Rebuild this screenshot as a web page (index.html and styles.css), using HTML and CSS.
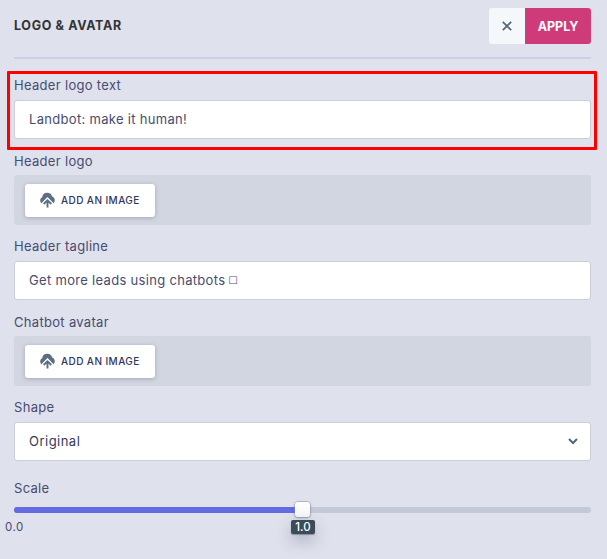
FILE: index.html
```html
<!DOCTYPE html>
<html lang="en">
<head>
<meta charset="utf-8">
<title>Logo &amp; Avatar</title>
<link rel="stylesheet" href="styles.css">
</head>
<body>
<svg class="symbols" aria-hidden="true">
  <symbol id="upload" viewBox="0 0 15 16">
    <path fill="#5c6f82" d="M2 11.500C.8 10.800.2 9.800.2 8.500c0-1.600.8-2.800 2-3.300C2.600 2.300 4.500.8 7.200.8c2.700 0 4.300 1.400 4.900 3.600 1.700.5 2.700 2 2.700 3.900 0 1.400-.6 2.500-1.800 3.200L7.500 5.800z"/>
    <path fill="none" stroke="#fff" stroke-width="1.300" d="M1.900 11.600 7.500 6l5.600 5.600"/>
    <path fill="none" stroke="#5c6f82" stroke-width="1.900" d="M7.500 15.600V8.700M3.700 12 7.500 8.300l3.800 3.700"/>
  </symbol>
</svg>
<main class="panel">
  <header class="header">
    <h1 class="title">LOGO &amp; AVATAR</h1>
    <div class="actions">
      <button class="close" aria-label="Close"><svg width="10" height="10" viewBox="0 0 10 10"><path d="M.8.8l8.400 8.400M9.200.8L.8 9.200"/></svg></button>
      <button class="apply">APPLY</button>
    </div>
  </header>
  <section class="field highlighted">
    <div class="label">Header logo text</div>
    <div class="input"><span>Landbot: make it human!</span></div>
  </section>
  <section class="field">
    <div class="label">Header logo</div>
    <div class="upload"><button class="add"><svg width="15" height="16"><use href="#upload"/></svg><span>ADD AN IMAGE</span></button></div>
  </section>
  <section class="field">
    <div class="label">Header tagline</div>
    <div class="input"><span>Get more leads using chatbots</span><span class="glyph">□</span></div>
  </section>
  <section class="field">
    <div class="label">Chatbot avatar</div>
    <div class="upload"><button class="add"><svg width="15" height="16"><use href="#upload"/></svg><span>ADD AN IMAGE</span></button></div>
  </section>
  <section class="field">
    <div class="label">Shape</div>
    <div class="input select"><span>Original</span><svg width="10" height="7" viewBox="0 0 10 7"><path d="M1 1l4 4 4-4"/></svg></div>
  </section>
  <section class="field scale">
    <div class="label">Scale</div>
    <div class="track">
      <div class="fill"></div>
      <div class="thumb"></div>
      <span class="min">0.0</span>
      <span class="value">1.0</span>
    </div>
  </section>
</main>
</body>
</html>
```
FILE: styles.css
```css
* { box-sizing: border-box; }
body {
  margin: 0;
  height: 559px;
  overflow: hidden;
  background: #dfe1ec;
  color: #484c70;
  font: 13px/20px Inter, "Liberation Sans", sans-serif;
  letter-spacing: .31px;
}
button { border: 0; margin: 0; padding: 0; font: inherit; letter-spacing: inherit; }
.symbols { position: absolute; width: 0; height: 0; }
.panel { padding: 0 16px 0 14px; }
.header {
  display: flex;
  justify-content: space-between;
  height: 59px;
  padding-top: 8px;
  border-bottom: 2px solid #cdd0e4;
}
.title { margin: 0; font-size: 12.5px; line-height: 35px; font-weight: 700; letter-spacing: .65px; color: #333; }
.actions { display: flex; height: 36px; border-radius: 3px; overflow: hidden; }
.close { width: 36px; display: grid; place-items: center; background: #f4f8fb; }
.close svg { fill: none; stroke: #52677a; stroke-width: 1.7; }
.apply { width: 66px; background: #cf3b79; color: #fff; font-size: 12.5px; font-weight: 700; line-height: 35px; letter-spacing: 0; }
.field { margin-top: 11px; }
.label { height: 20px; margin-bottom: 4px; white-space: nowrap; }
.input {
  display: flex;
  align-items: center;
  height: 39px;
  margin-top: 5px;
  padding: 0 12px 1px 14px;
  background: #fff;
  border: 1px solid #cdced5;
  border-radius: 3px;
  white-space: nowrap;
}
.field:has(.input) .label { margin-bottom: 0; }
.field:has(.input) + .field:has(.upload) { margin-top: 12px; }
.field.highlighted { position: relative; margin-top: 16px; }
.highlighted::after {
  content: "";
  position: absolute;
  inset: -4px -6px -11px -7px;
  border: 3px solid #fe0000;
  border-radius: 1px;
}
.field.scale { margin-top: 17px; }
.upload {
  height: 50px;
  padding: 9px 11px;
  background: #d2d6e1;
  border-radius: 3px;
}
.add {
  display: flex;
  align-items: center;
  gap: 6px;
  width: 130px;
  height: 33px;
  padding: 0 0 2px 15px;
  background: #fff;
  border-radius: 3px;
  box-shadow: 0 1px 4px rgba(72, 76, 112, .35);
  color: #30355c;
  font-size: 10px;
  font-weight: 500;
  letter-spacing: .42px;
  white-space: nowrap;
}
.glyph { margin-left: 3px; font: 10px/20px "DejaVu Sans", sans-serif; letter-spacing: 0; }
.select { justify-content: space-between; color: #353a61; letter-spacing: .48px; }
.select svg { fill: none; stroke: #52677a; stroke-width: 2; }
.scale .label { margin-bottom: 9px; }
.track { position: relative; height: 6px; background: #c4c9d7; border-radius: 3px; }
.fill { width: 50%; height: 6px; background: #646ae1; border-radius: 3px 0 0 3px; }
.thumb {
  position: absolute;
  left: 281px;
  top: -5px;
  width: 15px;
  height: 15px;
  background: linear-gradient(#fff, #f3f5f7);
  border-radius: 3px;
  box-shadow: 0 0 0 .5px #8d94a7, 0 1px 3px rgba(60, 66, 95, .4);
}
.min { position: absolute; left: -9px; top: 10px; font-size: 11.5px; letter-spacing: .5px; }
.value {
  position: absolute;
  left: 277px;
  top: 13px;
  width: 24px;
  height: 14px;
  background: #3a4b59;
  border-radius: 2px;
  box-shadow: 0 1px 1px rgba(50, 56, 80, .4), 0 7px 15px rgba(60, 65, 100, .3);
  color: #fff;
  font-size: 11.5px;
  font-weight: 500;
  letter-spacing: 0;
  line-height: 14px;
  text-align: center;
}
```
